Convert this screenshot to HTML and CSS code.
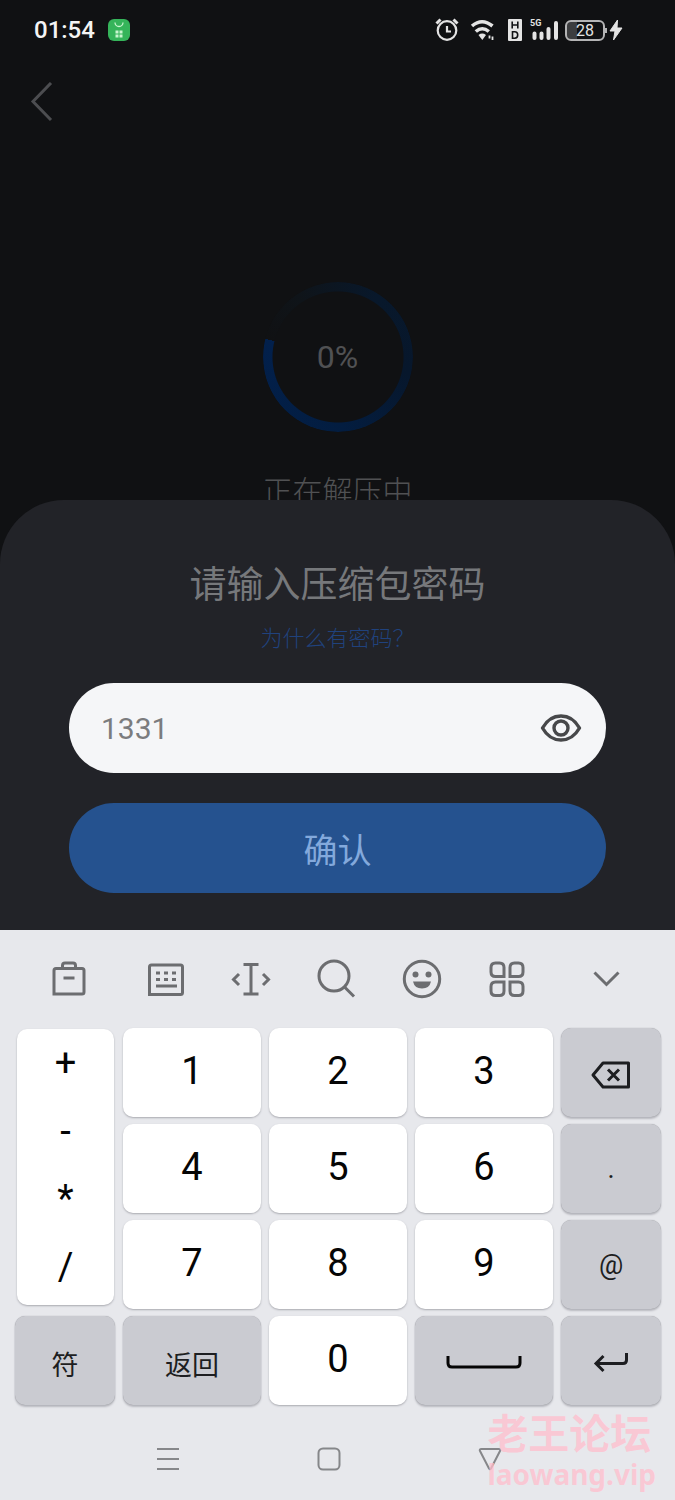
FILE: index.html
```html
<!DOCTYPE html>
<html lang="zh-CN">
<head>
<meta charset="utf-8">
<meta name="viewport" content="width=device-width, initial-scale=1">
<title>解压密码</title>
<link rel="stylesheet" href="styles.css">
</head>
<body>
<div class="screen">
  <main class="stage">
    <div class="status-bar">
      <div class="status-left">
        <span class="clock">01:54</span>
        <svg width="24" height="24" viewBox="0 0 24 24" aria-hidden="true">
          <rect x="1" y="1" width="22" height="22" rx="6" fill="#35b45a"/>
          <path d="M8 4.500a4 4 0 0 0 8 0" fill="none" stroke="#c9f5cf" stroke-width="1.300"/>
          <path d="M8.500 12.500h3v3h-3zM12.500 12.500h3v3h-3zM8.500 16.500h3v3h-3zM12.500 16.500h3v3h-3z" fill="#c9f5cf"/>
        </svg>
      </div>
      <div class="status-right">
        <svg width="24" height="24" viewBox="0 0 24 24" fill="none" stroke="#e4e4e4" stroke-width="2.200" aria-hidden="true">
          <circle cx="12" cy="12.500" r="9.300"/>
          <path d="M12 8v5.500h4"/>
          <path d="M1.500 5.500l4-4M22.500 5.500l-4-4" stroke-width="3"/>
        </svg>
        <svg width="26" height="24" viewBox="0 0 26 24" fill="none" stroke="#e4e4e4" stroke-width="3.600" aria-hidden="true">
          <path d="M2 8q10-8.500 20.500 0M5.800 13.500q6.500-5.500 13 0"/>
          <path d="M8.500 17q3.700-2.800 7.500 0l-3.700 5z" fill="#e4e4e4" stroke="none"/>
          <path d="M19.500 20.500v-3M22.500 18.500v3.500" stroke-width="1.800"/>
        </svg>
        <svg width="16" height="24" viewBox="0 0 16 24" aria-hidden="true">
          <rect x="1" y="1" width="14" height="22" rx="1" fill="#e4e4e4"/>
          <path d="M5.200 3.500v7M10.800 3.500v7M5 7h6M5.500 13.800v6.400h2.200q3 0 3-3.200t-3-3.200z" fill="none" stroke="#111214" stroke-width="1.600"/>
        </svg>
        <span class="signal">
          <span class="signal-label">5G</span>
          <svg width="28" height="24" viewBox="0 0 28 24" fill="none" stroke="#e4e4e4" stroke-width="4" stroke-linecap="round" aria-hidden="true">
            <path d="M3.500 15.500v4.500M10.500 15.500v4.500M17.500 11v9M25 5v15"/>
          </svg>
        </span>
        <span class="battery">28</span>
        <svg class="bolt" width="14" height="24" viewBox="0 0 14 24" aria-hidden="true">
          <path d="M8.500 2L1 13h5L4.500 22 13 10H8z" fill="#e4e4e4" stroke="#e4e4e4"/>
        </svg>
      </div>
    </div>
    <header class="app-header">
      <button class="back" type="button" aria-label="返回上一页">
        <svg width="24" height="40" viewBox="0 0 24 40" fill="none" stroke="#4c4d50" stroke-width="3" aria-hidden="true"><path d="M22 1L4 19.500 22 38"/></svg>
      </button>
    </header>
    <div class="progress"><span class="progress-value">0%</span></div>
    <p class="progress-label">正在解压中</p>
  </main>

  <form class="sheet">
    <h1 class="sheet-title"><label for="password">请输入压缩包密码</label></h1>
    <a class="help" href="#help">为什么有密码？</a>
    <div class="field">
      <input class="field-input" id="password" type="text" value="1331">
      <button class="field-toggle" type="button" aria-label="显示密码">
        <svg width="42" height="30" viewBox="0 0 42 30" fill="none" stroke="#47484a" stroke-width="3.400" aria-hidden="true">
          <path d="M2.500 15C7 7 14 3 21 3s14 4 18.500 12C35 23 28 27 21 27S7 23 2.500 15z" stroke-linejoin="round"/>
          <circle cx="21" cy="15" r="7"/>
        </svg>
      </button>
    </div>
    <button class="confirm" type="button">确认</button>
  </form>

  <section class="keyboard" aria-label="键盘">
    <div class="toolbar">
      <button class="tool" type="button" aria-label="剪贴板">
        <svg width="40" height="40" viewBox="0 0 40 40"><path d="M5 35V11.500q0-2 2-2h26q2 0 2 2V33q0 2-2 2zM13.500 9.500v-3Q13.500 4 16 4h8q2.500 0 2.500 2.500v3M14.500 19h11"/></svg>
      </button>
      <button class="tool" type="button" aria-label="键盘布局">
        <svg width="40" height="40" viewBox="0 0 40 40"><path d="M3.500 35.500V8q0-2 2-2h29q2 0 2 2v25.500q0 2-2 2zM10 27h21"/><path d="M10 14h4M18 14h4M26 14h4M10 20.500h4M18 20.500h4M26 20.500h4"/></svg>
      </button>
      <button class="tool" type="button" aria-label="移动光标">
        <svg width="40" height="40" viewBox="0 0 40 40"><path d="M12.500 5.500h15M12.500 35h15M20 5.500V35M8 15l-5.500 5.500L8 26M32 15l5.500 5.500L32 26"/></svg>
      </button>
      <button class="tool" type="button" aria-label="搜索">
        <svg width="40" height="40" viewBox="0 0 40 40"><circle cx="18" cy="17" r="15"/><path d="M28 27.500L38 37.500"/></svg>
      </button>
      <button class="tool" type="button" aria-label="表情">
        <svg width="40" height="40" viewBox="0 0 40 40"><circle cx="20" cy="20" r="17.700"/><g class="solid"><circle cx="13.500" cy="15.500" r="3"/><circle cx="26.500" cy="15.500" r="3"/><path d="M11 22.500h18q-1.500 7-9 7t-9-7z"/></g></svg>
      </button>
      <button class="tool" type="button" aria-label="更多">
        <svg width="40" height="40" viewBox="0 0 40 40"><path d="M17 17.500H8.500q-4.500 0-4.500-4.500V8.500Q4 4 8.500 4h4Q17 4 17 8.500zM23 17.500h8.500q4.500 0 4.500-4.500V8.500Q36 4 31.500 4h-4Q23 4 23 8.500zM17 23H8.500Q4 23 4 27.500V32q0 4.500 4.500 4.500h4q4.500 0 4.500-4.500zM23 23h8.500q4.500 0 4.500 4.500V32q0 4.500-4.500 4.500h-4Q23 36.500 23 32z"/></svg>
      </button>
      <button class="tool" type="button" aria-label="收起键盘">
        <svg width="40" height="40" viewBox="0 0 40 40"><path d="M9.500 13.500L21.500 25.500l12-12"/></svg>
      </button>
    </div>

    <div class="keys">
      <div class="symbols">
        <button class="symbol" type="button">+</button>
        <button class="symbol" type="button">-</button>
        <button class="symbol" type="button">*</button>
        <button class="symbol" type="button">/</button>
      </div>
      <button class="key" type="button">1</button>
      <button class="key" type="button">2</button>
      <button class="key" type="button">3</button>
      <button class="key key-alt" type="button" aria-label="删除">
        <svg width="42" height="30" viewBox="0 0 42 30"><path d="M13 3h25.500v24H13L3 15z" stroke-linejoin="round"/><path d="M18 9.500l11 11M29 9.500l-11 11"/></svg>
      </button>
      <button class="key" type="button">4</button>
      <button class="key" type="button">5</button>
      <button class="key" type="button">6</button>
      <button class="key key-alt key-mark" type="button">.</button>
      <button class="key" type="button">7</button>
      <button class="key" type="button">8</button>
      <button class="key" type="button">9</button>
      <button class="key key-alt key-mark" type="button">@</button>
      <button class="key key-alt" type="button">符</button>
      <button class="key key-alt" type="button">返回</button>
      <button class="key" type="button">0</button>
      <button class="key key-alt" type="button" aria-label="空格">
        <svg class="space" width="76" height="16" viewBox="0 0 76 16"><path d="M2 1v7q0 4 4 4h64q4 0 4-4V1"/></svg>
      </button>
      <button class="key key-alt" type="button" aria-label="换行">
        <svg width="36" height="24" viewBox="0 0 36 24"><path d="M33.500 2v7q0 3.500-3.500 3.500H3M10.500 5L3 12.500l7.500 7.500"/></svg>
      </button>
    </div>

    <nav class="system-nav" aria-label="系统导航">
      <button class="nav-button" type="button" aria-label="最近任务">
        <svg width="26" height="26" viewBox="0 0 26 26"><path d="M2 3h22M2 13h22M2 23h22"/></svg>
      </button>
      <button class="nav-button" type="button" aria-label="主页">
        <svg width="26" height="26" viewBox="0 0 26 26"><rect x="2.500" y="2.500" width="21" height="21" rx="4.500"/></svg>
      </button>
      <button class="nav-button" type="button" aria-label="返回">
        <svg width="26" height="26" viewBox="0 0 26 26"><path d="M4.500 3h17q2.500 0 1.500 2l-9 17.500q-1 1.500-2 0L3 5q-1-2 1.500-2z"/></svg>
      </button>
    </nav>
  </section>

  <div class="watermark">
    <span class="watermark-name">老王论坛</span>
    <span class="watermark-site">laowang.vip</span>
  </div>
</div>
</body>
</html>
```

FILE: styles.css
```css
* {
  box-sizing: border-box;
}

body {
  margin: 0;
  background: #e7e8ec;
  font-family: Roboto, "Noto Sans CJK SC", sans-serif;
}

button {
  margin: 0;
  padding: 0;
  border: 0;
  background: none;
  color: inherit;
  font: inherit;
}

svg {
  display: block;
  flex: none;
}

.screen {
  position: relative;
}

/* Extraction progress */

.stage {
  padding-bottom: 60px;
  background: #101113;
}

.status-bar {
  display: flex;
  align-items: center;
  justify-content: space-between;
  height: 60px;
  padding: 0 52px 0 34px;
}

.status-left {
  display: flex;
  align-items: center;
  gap: 12px;
}

.clock {
  color: #f4f4f4;
  font-size: 24px;
  font-weight: 500;
}

.status-right {
  display: flex;
  align-items: center;
  gap: 11px;
}

.signal {
  position: relative;
  margin-left: -3px;
}

.signal-label {
  position: absolute;
  top: 1px;
  left: -1px;
  color: #e4e4e4;
  font-size: 9px;
  font-weight: 700;
  line-height: 9px;
}

.battery {
  position: relative;
  width: 40px;
  height: 21px;
  margin-left: -5px;
  border: 2px solid #b4b4b5;
  border-radius: 6px;
  background: linear-gradient(90deg, #3c3d3f 28%, #101113 28%);
  color: #e4e4e4;
  font-size: 16px;
  line-height: 18px;
  text-align: center;
}

.battery::after {
  content: "";
  position: absolute;
  top: 6px;
  right: -4px;
  width: 2px;
  height: 5px;
  background: #b4b4b5;
}

.bolt {
  margin-left: -7px;
}

.app-header {
  display: flex;
  align-items: center;
  height: 84px;
  padding: 0 29px;
}

.progress {
  display: grid;
  place-items: center;
  position: relative;
  width: 150px;
  height: 150px;
  margin: 138px auto 40px;
}

.progress::before {
  content: "";
  position: absolute;
  inset: 0;
  border-radius: 50%;
  background: conic-gradient(from 284deg, #101113 0%, #0f1419 12%, #08182b 30%, #07172c 50%, #031d40 70%, #02204c 100%);
  -webkit-mask: radial-gradient(closest-side, transparent 65px, #000 66px);
  mask: radial-gradient(closest-side, transparent 65px, #000 66px);
}

.progress-value {
  position: relative;
  color: #505153;
  font-size: 32px;
}

.progress-label {
  margin: 0;
  color: #505153;
  font-size: 30px;
  font-weight: 300;
  line-height: 40px;
  text-align: center;
}

/* Password sheet */

.sheet {
  display: flex;
  flex-direction: column;
  position: relative;
  margin-top: -72px;
  padding: 58px 69px 37px;
  border-radius: 64px 64px 0 0;
  background: #222328;
}

.sheet-title {
  margin: 0 0 9px;
  color: #76787b;
  font-size: 37px;
  font-weight: 400;
  line-height: 56px;
  text-align: center;
}

.help {
  align-self: center;
  margin-bottom: 28px;
  color: #20427d;
  font-size: 22px;
  font-weight: 300;
  line-height: 32px;
  text-decoration: none;
}

.field {
  display: flex;
  align-items: center;
  height: 90px;
  margin-bottom: 30px;
  padding: 0 24px 0 32px;
  border-radius: 45px;
  background: #f5f6f8;
}

.field-input {
  flex: 1;
  min-width: 0;
  padding: 0;
  border: 0;
  outline: 0;
  background: none;
  color: #7b7c7e;
  font: inherit;
  font-size: 30px;
}

.confirm {
  height: 90px;
  border-radius: 45px;
  background: #25528f;
  color: #83a9dc;
  font-size: 34px;
}

/* Keyboard */

.keyboard {
  background: #e7e8ec;
}

.toolbar {
  display: grid;
  grid-template-columns: 108fr repeat(5, 85fr) 111fr;
  height: 98px;
  padding: 0 14px 0 15px;
}

.tool {
  display: grid;
  place-items: center;
}

.tool svg {
  fill: none;
  stroke: #6c6d70;
  stroke-width: 3;
}

.tool .solid {
  fill: #6c6d70;
  stroke: none;
}

.keys {
  display: grid;
  grid-template-columns: 100fr repeat(3, 138fr) 100fr;
  grid-auto-rows: 89px;
  gap: 7px 8px;
  padding: 0 14px 0 15px;
}

.symbols {
  display: grid;
  grid-row: span 3;
  margin: 1px 1px 4px 2px;
  padding-bottom: 4px;
  border-radius: 10px;
  background: #fff;
  box-shadow: 0 1px 2px #a9aab0;
}

.symbol {
  color: #050505;
  font-size: 38px;
  line-height: 60px;
}

.key {
  display: grid;
  place-items: center;
  padding-bottom: 4px;
  border-radius: 10px;
  background: #fff;
  box-shadow: 0 1px 2px #a9aab0;
  color: #050505;
  font-size: 38px;
}

.key-alt {
  padding: 5px 0 0;
  background: #cacbd1;
  box-shadow: 0 0 1px #8f9096, 0 2px 2px #b9bac0;
  color: #1d1e21;
  font-size: 27px;
}

.key-mark {
  padding: 0;
}

.key-alt svg {
  fill: none;
  stroke: #1d1e21;
  stroke-width: 3;
}

.key-alt .space {
  stroke: #050505;
}

.system-nav {
  display: grid;
  grid-template-columns: repeat(3, 1fr);
  height: 99px;
  padding: 8px 105px 0 87px;
}

.nav-button {
  display: grid;
  place-items: center;
}

.nav-button svg {
  fill: none;
  stroke: #86878a;
  stroke-width: 2;
}

/* Site mark laid over the corner */

.watermark {
  display: flex;
  flex-direction: column;
  gap: 3px;
  position: absolute;
  right: 19px;
  bottom: 12px;
  color: rgba(255, 190, 204, 0.75);
  font-weight: 700;
  pointer-events: none;
}

.watermark-name {
  font-family: "Noto Sans CJK SC", sans-serif;
  font-size: 41px;
  line-height: 44px;
}

.watermark-site {
  font-family: "Noto Sans", sans-serif;
  font-size: 28px;
  line-height: 36px;
}
```
